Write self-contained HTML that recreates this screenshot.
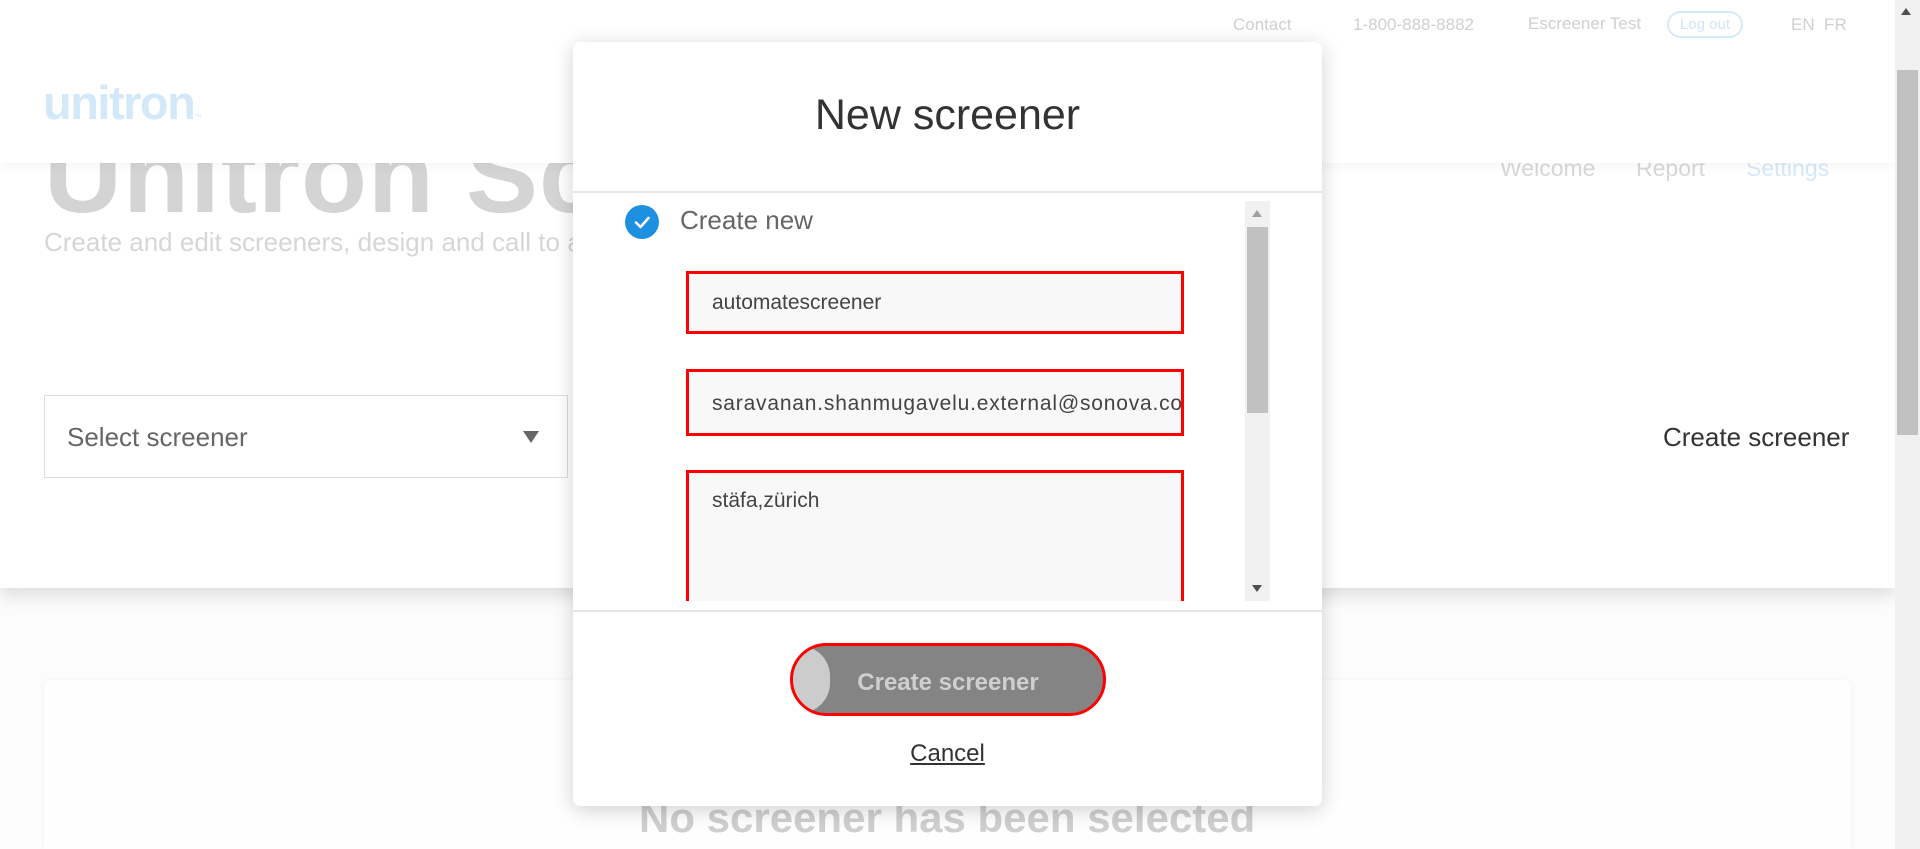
<!DOCTYPE html>
<html style="width:1920px;height:849px;overflow:hidden"><head><meta charset="utf-8"><style>
*{margin:0;padding:0;box-sizing:border-box}
body{width:1920px;height:849px;overflow:hidden;background:#fcfcfc;font-family:"Liberation Sans",sans-serif;position:relative}
.a{position:absolute;white-space:nowrap}
</style></head><body>
<div class="a" style="left:0;top:0;width:1895px;height:588px;background:#fff;box-shadow:0 8px 16px rgba(0,0,0,.12)"></div>
<div class="a" style="left:44px;top:112px;font-size:108px;font-weight:bold;color:#d4d4d4;letter-spacing:1px">Unitron Screeners</div>
<div class="a" style="left:44px;top:227px;font-size:26px;color:#d6d6d6">Create and edit screeners, design and call to action</div>
<div class="a" style="left:1500px;top:155px;font-size:23px;color:#d8d8d8">Welcome</div>
<div class="a" style="left:1636px;top:155px;font-size:23px;color:#d8d8d8">Report</div>
<div class="a" style="left:1746px;top:155px;font-size:23px;color:#d6e9f8">Settings</div>
<div class="a" style="left:0;top:0;width:1895px;height:163px;background:#fff;box-shadow:0 4px 10px rgba(0,0,0,.04)"></div>
<div class="a" style="left:43px;top:75px;font-size:47px;font-weight:bold;color:#d3e9f9;letter-spacing:-1.5px">unitron<span style="font-size:7px;font-weight:normal;letter-spacing:0">™</span></div>
<div class="a" style="left:1233px;top:15px;font-size:17px;color:#d0d0d0">Contact</div>
<div class="a" style="left:1353px;top:15px;font-size:17px;color:#d0d0d0">1-800-888-8882</div>
<div class="a" style="left:1528px;top:14px;font-size:17px;color:#d0d0d0">Escreener Test</div>
<div class="a" style="left:1667px;top:11px;width:76px;height:27px;border:2px solid #d6eafa;border-radius:14px;font-size:15px;color:#cfe5f8;text-align:center;line-height:23px">Log out</div>
<div class="a" style="left:1791px;top:15px;font-size:17px;color:#d0d0d0">EN&nbsp; FR</div>
<div class="a" style="left:44px;top:395px;width:524px;height:83px;border:1px solid #ddd;background:#fff"></div>
<div class="a" style="left:67px;top:422px;font-size:26px;color:#666">Select screener</div>
<div class="a" style="left:523px;top:431px;width:0;height:0;border-left:8px solid transparent;border-right:8px solid transparent;border-top:12px solid #666"></div>
<div class="a" style="left:1663px;top:422px;font-size:26px;color:#333">Create screener</div>
<div class="a" style="left:44px;top:680px;width:1807px;height:169px;background:#fefefe;border-radius:6px 6px 0 0;box-shadow:0 0 6px rgba(0,0,0,.04)"></div>
<div class="a" style="left:639px;top:794px;font-size:42px;font-weight:bold;color:#cfcfcf">No screener has been selected</div>
<div class="a" style="left:1895px;top:0;width:25px;height:849px;background:#f1f1f1"></div>
<div class="a" style="left:1897px;top:70px;width:21px;height:365px;background:#c1c1c1"></div>
<div class="a" style="left:1901px;top:8px;width:0;height:0;border-left:5px solid transparent;border-right:5px solid transparent;border-bottom:7px solid #505050"></div>
<div class="a" style="left:573px;top:42px;width:749px;height:764px;background:#fff;border-radius:7px;box-shadow:0 4px 20px rgba(0,0,0,.18)"></div>
<div class="a" style="left:573px;top:91px;width:749px;text-align:center;font-size:43px;color:#333">New screener</div>
<div class="a" style="left:573px;top:191px;width:749px;height:2px;background:#e6e6e6"></div>
<div class="a" style="left:573px;top:610px;width:749px;height:2px;background:#e6e6e6"></div>
<div class="a" style="left:625px;top:205px;width:34px;height:34px;border-radius:50%;background:#1e90e0"></div>
<svg class="a" style="left:625px;top:205px" width="34" height="34"><path d="M11 17.5l4.5 4.5 8-9" fill="none" stroke="#fff" stroke-width="2.6" stroke-linecap="round" stroke-linejoin="round"/></svg>
<div class="a" style="left:680px;top:205px;font-size:26px;color:#666">Create new</div>
<div class="a" style="left:686px;top:271px;width:498px;height:63px;border:3px solid #f00;background:#f8f8f8"></div>
<div class="a" style="left:712px;top:291px;font-size:21px;color:#444">automatescreener</div>
<div class="a" style="left:686px;top:369px;width:498px;height:67px;border:3px solid #f00;background:#f8f8f8;overflow:hidden"><div style="position:absolute;left:23px;top:20px;font-size:21px;color:#444;white-space:nowrap;letter-spacing:.8px">saravanan.shanmugavelu.external@sonova.com</div></div>
<div class="a" style="left:686px;top:470px;width:498px;height:131px;border:3px solid #f00;border-bottom:none;background:#f8f8f8"></div>
<div class="a" style="left:712px;top:489px;font-size:21px;color:#444">stäfa,zürich</div>
<div class="a" style="left:1245px;top:201px;width:25px;height:400px;background:#f1f1f1"></div>
<div class="a" style="left:1247px;top:227px;width:21px;height:186px;background:#c1c1c1"></div>
<div class="a" style="left:1252px;top:210px;border-left:5px solid transparent;border-right:5px solid transparent;border-bottom:7px solid #a0a0a0"></div>
<div class="a" style="left:1252px;top:585px;border-left:5px solid transparent;border-right:5px solid transparent;border-top:7px solid #505050"></div>
<div class="a" style="left:790px;top:643px;width:316px;height:73px;border:3px solid #f00;border-radius:37px;background:#838483;overflow:hidden"><div style="position:absolute;left:0;top:0;width:37px;height:100%;background:#ccc;border-radius:0 30px 30px 0"></div></div>
<div class="a" style="left:790px;top:669px;width:316px;text-align:center;font-size:24px;font-weight:bold;color:#cfcfcf">Create screener</div>
<div class="a" style="left:573px;top:740px;width:749px;text-align:center;font-size:24px;color:#333;text-decoration:underline">Cancel</div>
</body></html>
